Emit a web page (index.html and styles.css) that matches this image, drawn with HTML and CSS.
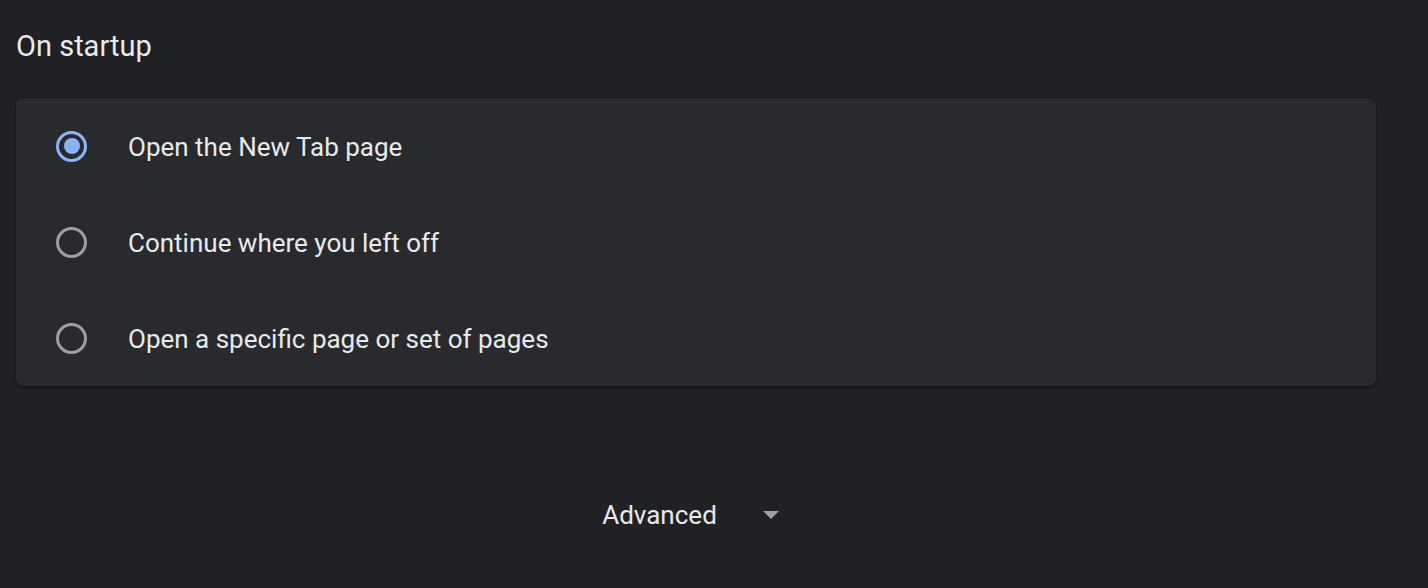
FILE: index.html
```html
<!DOCTYPE html>
<html>
<head>
<meta charset="utf-8">
<link rel="stylesheet" href="styles.css">
</head>
<body>
<div class="page">
  <h2 class="title">On startup</h2>
  <div class="card">
    <div class="row">
      <span class="radio checked"></span>
      <span class="label">Open the New Tab page</span>
    </div>
    <div class="row">
      <span class="radio"></span>
      <span class="label">Continue where you left off</span>
    </div>
    <div class="row">
      <span class="radio"></span>
      <span class="label">Open a specific page or set of pages</span>
    </div>
  </div>
  <div class="advanced">
    <span class="adv-label">Advanced</span>
    <span class="arrow"></span>
  </div>
</div>
</body>
</html>
```
FILE: styles.css
```css
html, body {
  margin: 0;
  padding: 0;
  background: #202124;
}
.page {
  width: 1428px;
  height: 588px;
  padding: 0 52px 0 16px;
  box-sizing: border-box;
  font-family: Roboto, "Liberation Sans", sans-serif;
  color: #e8eaed;
}
.title {
  margin: 0;
  height: 98px;
  padding-top: 28px;
  box-sizing: border-box;
  font-size: 29px;
  font-weight: 400;
  line-height: 36px;
}
.card {
  background: #292a2d;
  border-radius: 8px;
  box-shadow: 0 1px 3px rgba(0,0,0,0.45);
  display: flex;
  flex-direction: column;
}
.row {
  height: 96px;
  display: flex;
  align-items: center;
  padding-left: 40px;
}
.radio {
  width: 31px;
  height: 31px;
  box-sizing: border-box;
  border: 3.5px solid #9aa0a6;
  border-radius: 50%;
  display: flex;
  align-items: center;
  justify-content: center;
  margin-right: 41px;
}
.radio.checked {
  border-color: #8ab4f8;
}
.radio.checked::after {
  content: "";
  width: 16px;
  height: 16px;
  border-radius: 50%;
  background: #8ab4f8;
}
.label {
  font-size: 26px;
  line-height: 30px;
  padding-top: 2px;
}
.advanced {
  margin-top: 114px;
  display: flex;
  align-items: center;
  justify-content: center;
  padding-right: 11px;
}
.adv-label {
  font-size: 26px;
  line-height: 30px;
  margin-right: 46px;
}
.arrow {
  width: 0;
  height: 0;
  border-left: 8px solid transparent;
  border-right: 8px solid transparent;
  border-top: 8px solid #9aa0a6;
}
```
